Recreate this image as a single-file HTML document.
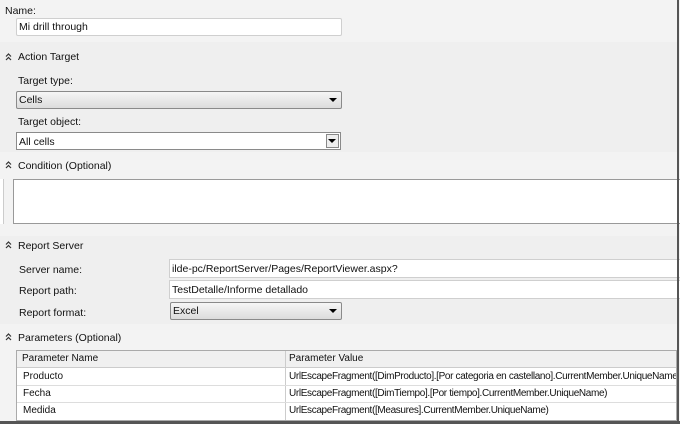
<!DOCTYPE html>
<html><head><style>
body{margin:0;width:680px;height:424px;overflow:hidden;background:#f3f3f3;font-family:"Liberation Sans",sans-serif;font-size:10.5px;color:#111;position:relative}
.a{position:absolute}
.t{position:absolute;white-space:nowrap;line-height:12px}
.box{position:absolute;background:#fff;border:1px solid #cfcfcf;box-sizing:border-box}
.dd{position:absolute;box-sizing:border-box;border:1px solid #8a8a8a;border-radius:2px}
.arr{position:absolute;right:4px;top:6px;width:0;height:0;border-left:4px solid transparent;border-right:4px solid transparent;border-top:4px solid #000}
.cell{position:absolute;line-height:17px;white-space:nowrap;font-size:10px;overflow:hidden}
svg.ch{position:absolute;width:7px;height:8px}
</style></head><body>
<div class="a" style="left:0;top:42px;width:677px;height:110px;background:#efefef"></div>
<div class="a" style="left:0;top:236px;width:677px;height:88px;background:#efefef"></div>

<div class="t" style="left:5px;top:5px">Name:</div>
<div class="box" style="left:16px;top:18px;width:326px;height:18px;border-radius:2px"></div>
<div class="t" style="left:19px;top:21px">Mi drill through</div>

<svg class="ch" style="left:5px;top:53px" viewBox="0 0 7 8"><path d="M1 3.5L3.5 1L6 3.5M1 7L3.5 4.5L6 7" fill="none" stroke="#333" stroke-width="1.2"/></svg>
<div class="t" style="left:18px;top:51px">Action Target</div>
<div class="t" style="left:18px;top:75px">Target type:</div>
<div class="dd" style="left:16px;top:91px;width:326px;height:18px;background:linear-gradient(#f6f6f6,#dcdcdc)"><span class="t" style="left:2px;top:2px">Cells</span><div class="arr"></div></div>
<div class="t" style="left:18px;top:116px">Target object:</div>
<div class="dd" style="left:16px;top:132px;width:325px;height:18px;background:#fff;border-radius:0"><span class="t" style="left:2px;top:3px">All cells</span><div class="a" style="right:1px;top:1px;width:13px;height:14px;border:1px solid #888;box-sizing:border-box;background:#eee"><div class="arr" style="right:2px;top:4px"></div></div></div>

<svg class="ch" style="left:5px;top:161px" viewBox="0 0 7 8"><path d="M1 3.5L3.5 1L6 3.5M1 7L3.5 4.5L6 7" fill="none" stroke="#333" stroke-width="1.2"/></svg>
<div class="t" style="left:18px;top:160px">Condition (Optional)</div>
<div class="a" style="left:13px;top:179px;width:667px;height:45px;background:#fff;border:1px solid #999;border-right:none;box-sizing:border-box"></div>
<div class="a" style="left:0;top:179px;width:3px;height:45px;border-right:1px solid #ccc;background:#fff"></div>

<svg class="ch" style="left:5px;top:241px" viewBox="0 0 7 8"><path d="M1 3.5L3.5 1L6 3.5M1 7L3.5 4.5L6 7" fill="none" stroke="#333" stroke-width="1.2"/></svg>
<div class="t" style="left:18px;top:240px">Report Server</div>
<div class="t" style="left:19px;top:264px">Server name:</div>
<div class="box" style="left:169px;top:259px;width:511px;height:19px;border-right:none"></div>
<div class="t" style="left:172px;top:263px">ilde-pc/ReportServer/Pages/ReportViewer.aspx?</div>
<div class="t" style="left:19px;top:285px">Report path:</div>
<div class="box" style="left:169px;top:280px;width:511px;height:19px;border-right:none"></div>
<div class="t" style="left:172px;top:284px">TestDetalle/Informe detallado</div>
<div class="t" style="left:19px;top:307px">Report format:</div>
<div class="dd" style="left:170px;top:302px;width:172px;height:18px;background:linear-gradient(#f6f6f6,#dcdcdc)"><span class="t" style="left:2px;top:2px">Excel</span><div class="arr"></div></div>

<svg class="ch" style="left:5px;top:333px" viewBox="0 0 7 8"><path d="M1 3.5L3.5 1L6 3.5M1 7L3.5 4.5L6 7" fill="none" stroke="#333" stroke-width="1.2"/></svg>
<div class="t" style="left:18px;top:332px">Parameters (Optional)</div>
<div class="a" style="left:16px;top:350px;width:661px;height:71px;background:#fff;border:1px solid #aaa;box-sizing:border-box"></div>
<div class="a" style="left:17px;top:351px;width:659px;height:16px;background:#f0f0f0;border-bottom:1px solid #ccc"></div>
<div class="a" style="left:285px;top:351px;width:1px;height:69px;background:#ccc"></div>
<div class="a" style="left:17px;top:385px;width:659px;height:1px;background:#ddd"></div>
<div class="a" style="left:17px;top:402px;width:659px;height:1px;background:#ddd"></div>
<div class="cell" style="left:22px;top:351px;line-height:16px">Parameter Name</div>
<div class="cell" style="left:289px;top:351px;line-height:16px">Parameter Value</div>
<div class="cell" style="left:23px;top:368px">Producto</div>
<div class="cell" style="left:289px;top:368px;width:387px;letter-spacing:-0.35px">UrlEscapeFragment([DimProducto].[Por categoria en castellano].CurrentMember.UniqueName)</div>
<div class="cell" style="left:23px;top:385px">Fecha</div>
<div class="cell" style="left:289px;top:385px;letter-spacing:-0.35px">UrlEscapeFragment([DimTiempo].[Por tiempo].CurrentMember.UniqueName)</div>
<div class="cell" style="left:23px;top:402px">Medida</div>
<div class="cell" style="left:289px;top:402px;letter-spacing:-0.35px">UrlEscapeFragment([Measures].CurrentMember.UniqueName)</div>

<div class="a" style="left:677px;top:0;width:2px;height:424px;background:#555"></div>
<div class="a" style="left:0;top:421px;width:680px;height:3px;background:#555"></div>
</body></html>
